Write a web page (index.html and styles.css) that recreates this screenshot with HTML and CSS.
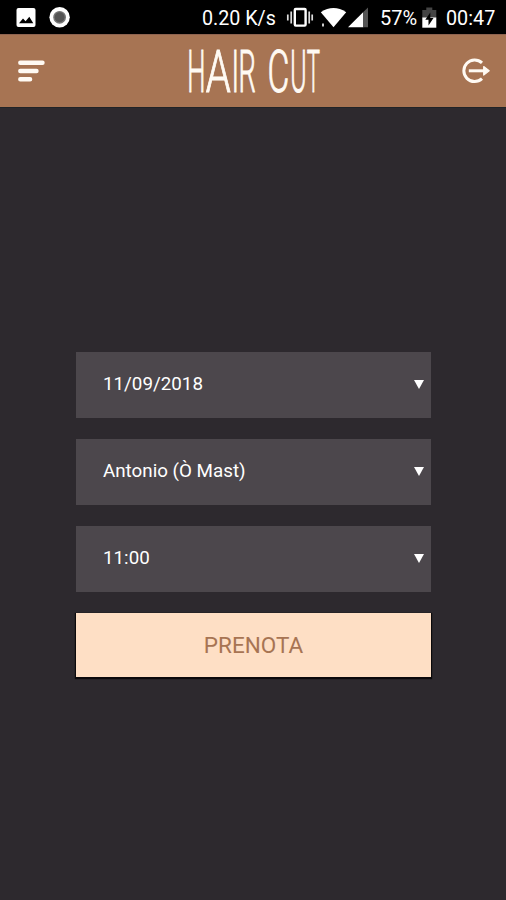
FILE: index.html
```html
<!DOCTYPE html>
<html lang="it">
<head>
<meta charset="utf-8">
<title>Hair Cut</title>
<link rel="stylesheet" href="styles.css">
</head>
<body>
<div class="status">
  <svg class="status-left" width="72" height="34" viewBox="0 0 72 34">
    <rect x="16.5" y="8" width="19" height="19" rx="2" fill="#fff"/>
    <path d="M19 23.2l4-4.6 2.6 2.6 3.7-4.4 4 6.4z" fill="#000"/>
    <circle cx="59.6" cy="17.3" r="10.2" fill="#fff"/>
    <circle cx="59.6" cy="17.3" r="5.7" fill="#555" stroke="#777" stroke-width="1.4"/>
  </svg>
  <span class="speed">0.20 K/s</span>
  <svg class="signals" width="84" height="34" viewBox="286 0 84 34">
    <rect x="294.8" y="9" width="10.8" height="16.6" rx="1" fill="none" stroke="#fff" stroke-width="2.4"/>
    <path d="M291.2 11.5v12M287.8 14.5v6M309.2 11.5v12M312.2 14.5v6" stroke="#ddd" stroke-width="1.7"/>
    <path d="M320.8 12.2Q333.5 3.8 346.2 12.2L333.5 27.2z" fill="#fff"/>
    <path d="M323 23.5v3" stroke="#ccc" stroke-width="2"/>
    <path d="M348 27.2L363.3 12v15.2z" fill="#fff"/>
    <path d="M363.3 12l4.7-4.6v19.8h-4.7z" fill="#555"/>
  </svg>
  <span class="percent">57%</span>
  <svg class="battery" width="16" height="34" viewBox="421 0 16 34">
    <path d="M422.3 10h4V7.5h6V10h4v8h-14z" fill="#444"/>
    <path d="M422.3 17.5h14v10.2h-14z" fill="#fff"/>
    <path d="M430.3 12.5l-5 7.3h3.2v5.7l5-7.5h-3.2z" fill="#000"/>
  </svg>
  <span class="clock">00:47</span>
</div>
<header class="bar">
  <svg class="menu" width="30" height="24" viewBox="0 0 30 24">
    <path d="M4.3 3.8h22.2M4.3 12h16.2M4.3 20.2h9.8" stroke="#fffaf3" stroke-width="4.4" stroke-linecap="round"/>
  </svg>
  <svg class="logo" width="140" height="72" viewBox="184 35 140 72">
    <text y="91.5" xml:space="preserve"><tspan x="186.3" textLength="18.2" lengthAdjust="spacingAndGlyphs">H</tspan><tspan x="204.7" textLength="25" lengthAdjust="spacingAndGlyphs">A</tspan><tspan x="230.6" textLength="7.6" lengthAdjust="spacingAndGlyphs">I</tspan><tspan x="237.4" textLength="17.4" lengthAdjust="spacingAndGlyphs">R</tspan> <tspan x="266.4" textLength="21.8" lengthAdjust="spacingAndGlyphs">C</tspan><tspan x="289.3" textLength="16.3" lengthAdjust="spacingAndGlyphs">U</tspan><tspan x="305.7" textLength="13.2" lengthAdjust="spacingAndGlyphs">T</tspan></text>
  </svg>
  <svg class="exit" width="32" height="30" viewBox="460 56 32 30" fill="none" stroke="#fffaf3">
    <path d="M482 62.9A10.8 10.8 0 1 0 482 78.7" stroke-width="3"/>
    <path d="M468.8 70.8h16" stroke-width="3"/>
    <path d="M483.7 66.5l5.5 4.3-5.5 4.3z" fill="#fffaf3" stroke-width="1.2" stroke-linejoin="round"/>
  </svg>
</header>
<main class="form">
  <div class="field"><span>11/09/2018</span><i class="arrow"></i></div>
  <div class="field"><span>Antonio (Ò Mast)</span><i class="arrow"></i></div>
  <div class="field"><span>11:00</span><i class="arrow"></i></div>
  <button class="submit">PRENOTA</button>
</main>
</body>
</html>
```
FILE: styles.css
```css
* { box-sizing: border-box; }
body {
  margin: 0;
  height: 900px;
  overflow: hidden;
  background: #2d292e;
  font-family: Roboto, "Liberation Sans", sans-serif;
  color: #fff;
}
svg { display: block; flex: none; }
.status {
  display: flex;
  align-items: center;
  height: 34px;
  background: #000;
  font-size: 20px;
  line-height: 34px;
  white-space: nowrap;
}
.status span { flex: none; padding-top: 2px; }
.status .speed { width: 84px; margin-left: 130px; padding-top: 3px; font-size: 19.7px; }
.percent { width: 41px; margin-left: 10px; }
.status .clock { margin-left: 9px; padding-top: 3px; font-size: 19.8px; }
.bar {
  display: flex;
  align-items: center;
  justify-content: space-between;
  height: 74px;
  padding: 0 14px 0 16px;
  background: #a77453;
  border-top: 1px solid #8e6350;
  border-bottom: 1px solid #202327;
}
.logo { margin-left: 4px; overflow: visible; }
.logo text {
  font-size: 59px;
  font-weight: 300;
  fill: #fffaf3;
  stroke: #fffaf3;
  stroke-width: 1px;
}
.form {
  display: flex;
  flex-direction: column;
  gap: 21px;
  width: 355px;
  margin: 244px 0 0 76px;
}
.field {
  display: flex;
  align-items: center;
  justify-content: space-between;
  height: 66px;
  padding: 0 7px 2px 27px;
  background: #4c474c;
  font-size: 18.8px;
}
.arrow {
  border: 5px solid transparent;
  border-top: 9px solid #fff;
  border-bottom: 0;
}
.submit {
  height: 64px;
  padding: 0;
  border: 0;
  background: #fedfc5;
  box-shadow: 0 1px 1px 1px #0b090b;
  color: #a77453;
  font: 400 22.5px Roboto, "Liberation Sans", sans-serif;
}
```
